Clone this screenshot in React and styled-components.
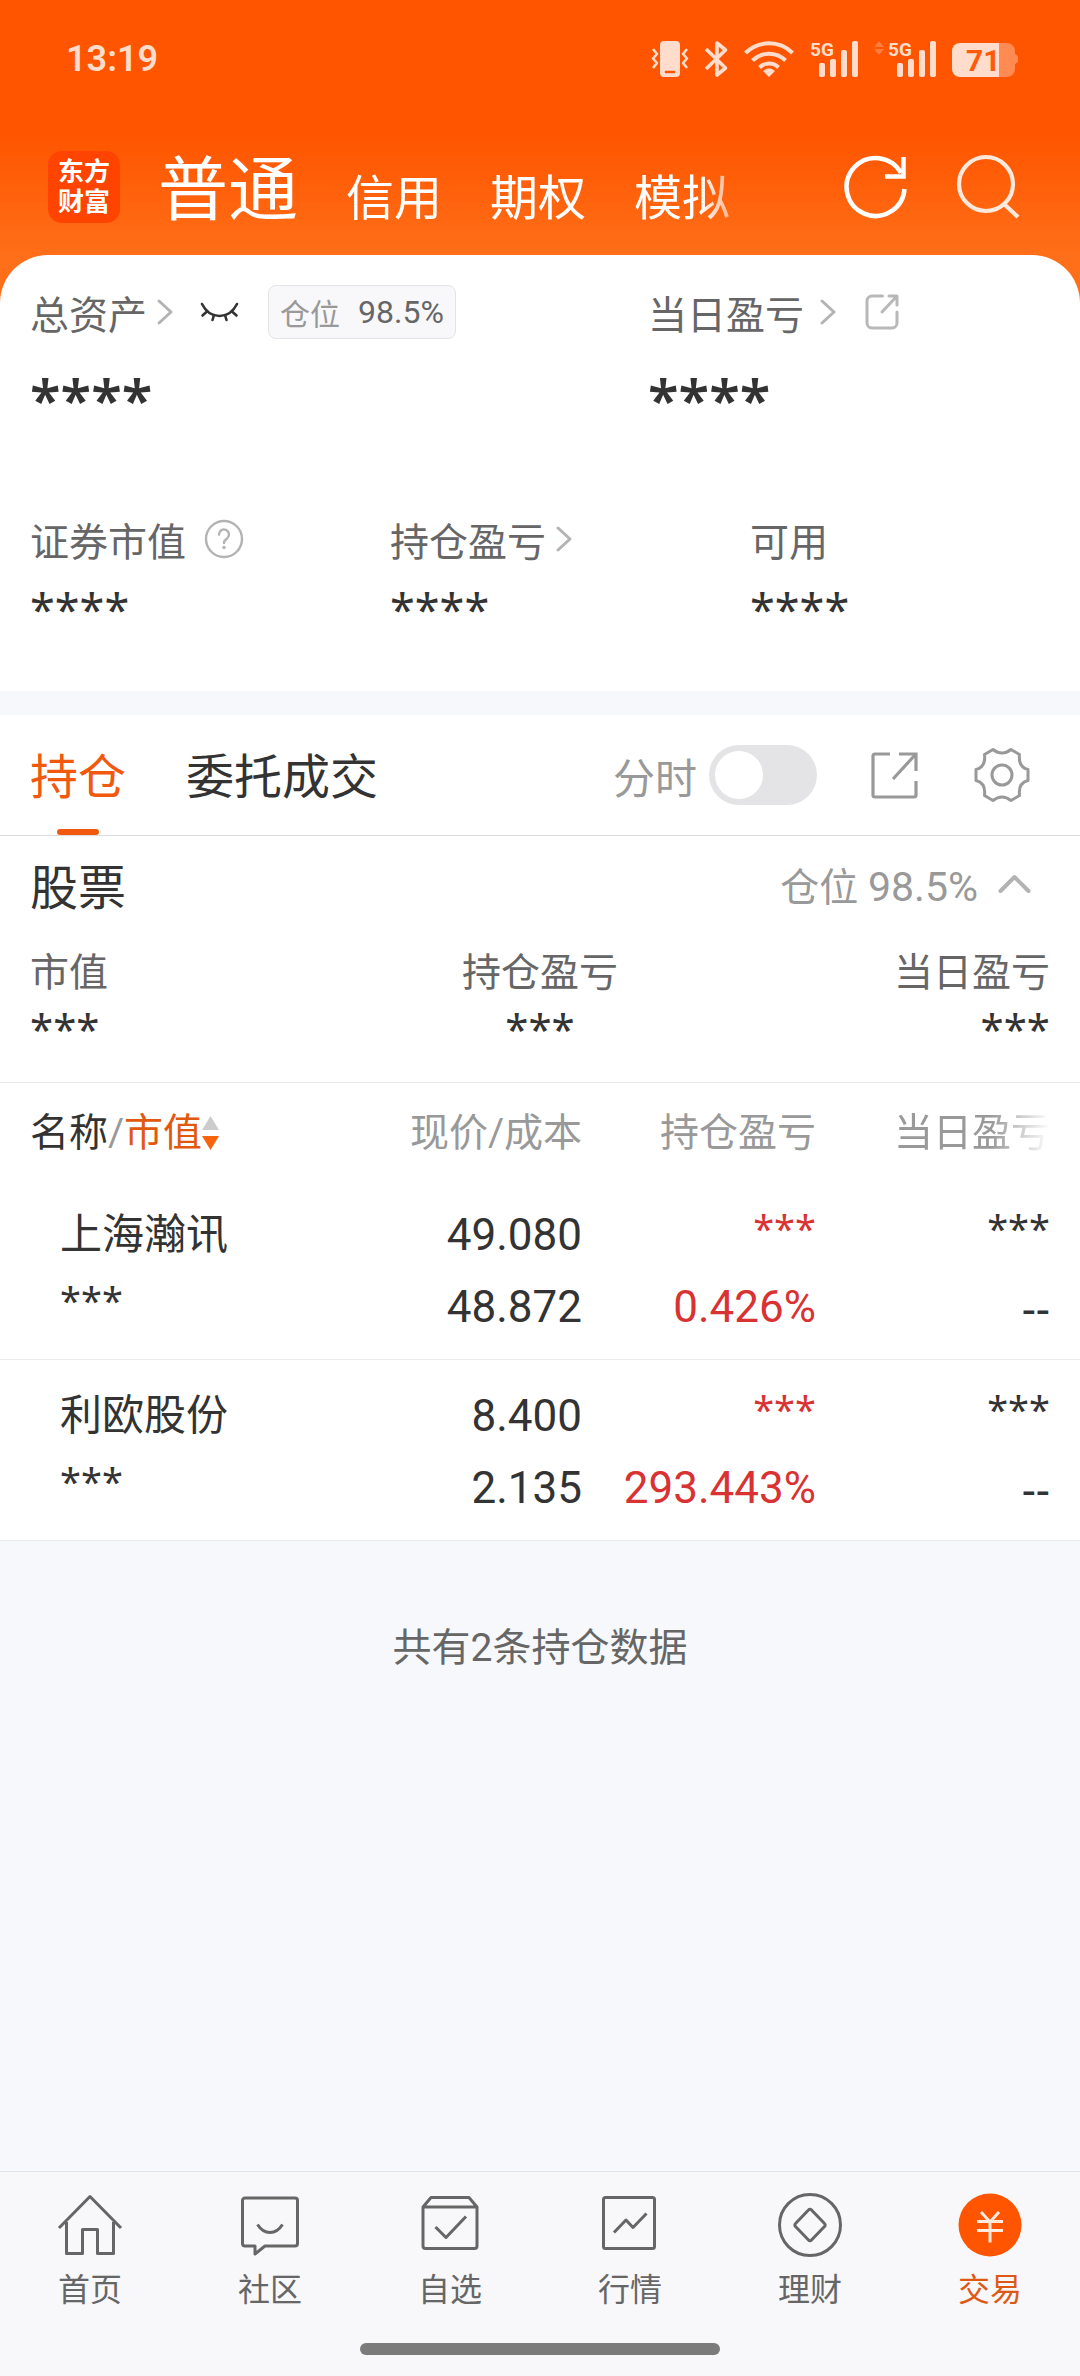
import React, { useState } from "react";
import styled, { createGlobalStyle } from "styled-components";

const GlobalStyle = createGlobalStyle`
  *, *::before, *::after { box-sizing: border-box; }
  body {
    margin: 0;
    background: #f7f8fb;
    color: #333;
    font-family: Roboto, "Noto Sans CJK SC", sans-serif;
    font-size: 39px;
  }
  button {
    border: 0;
    padding: 0;
    background: none;
    color: inherit;
    font: inherit;
    cursor: pointer;
  }
  a { color: inherit; text-decoration: none; }
  svg { display: block; flex: none; overflow: visible; }
  h1, h2, p, dl, dt, dd { margin: 0; font-weight: 400; font-size: inherit; }
`;

const Page = styled.div`
  display: flex;
  flex-direction: column;
  min-height: 100vh;
`;

/* ---------- header ---------- */

const Header = styled.header`
  padding-bottom: 48px;
  background: linear-gradient(#ff5500 0, #ff5500 134px, #ff6e18 254px);
  color: #fff;
`;

const StatusBar = styled.div`
  display: flex;
  align-items: center;
  justify-content: space-between;
  height: 118px;
  padding: 0 62px 0 66px;
  color: #ffdccb;
`;

const Clock = styled.time`
  font-size: 36px;
  font-weight: 600;
`;

const StatusIcons = styled.div`
  display: flex;
  align-items: center;
  gap: 16px;
`;

const TitleBar = styled.div`
  display: flex;
  align-items: center;
  height: 137px;
  padding: 0 60px 0 48px;
`;

const Logo = styled.a`
  display: flex;
  flex-direction: column;
  align-items: center;
  justify-content: center;
  width: 72px;
  height: 72px;
  border-radius: 14px;
  background: #ff4400;
  font-size: 26px;
  font-weight: 700;
  line-height: 30px;
`;

const AccountTabs = styled.nav`
  display: flex;
  flex: 1;
  align-items: baseline;
  gap: 48px;
  margin: 0 27px 0 38px;
  padding-top: 16px;
  overflow: hidden;
  white-space: nowrap;
  mask-image: linear-gradient(to right, #000 calc(100% - 118px), transparent calc(100% - 56px));
`;

const AccountTab = styled.button`
  font-size: ${(p) => (p.$active ? 70 : 48)}px;
  line-height: 88px;
`;

const HeaderActions = styled.div`
  display: flex;
  align-items: center;
  gap: 50px;
`;

/* ---------- asset panel ---------- */

const AssetPanel = styled.section`
  margin-top: -48px;
  padding: 30px 0 54px;
  border-radius: 48px 48px 0 0;
  background: #fff;
`;

const TopAssets = styled.div`
  display: grid;
  grid-template-columns: 3fr 2fr;
  margin-bottom: 82px;
`;

const AssetColumns = styled.div`
  display: grid;
  grid-template-columns: repeat(3, 1fr);
`;

const Asset = styled.div`
  padding-left: ${(p) => (p.$flush ? 0 : 30)}px;
`;

const LabelRow = styled.div`
  display: flex;
  align-items: center;
  height: 54px;
  color: #666;
`;

const LabelButton = styled.button`
  display: flex;
  align-items: center;
  gap: ${(p) => p.$gap}px;
`;

const IconButton = styled.button`
  margin-left: ${(p) => p.$space || 0}px;
`;

const PositionBadge = styled.span`
  display: flex;
  align-items: center;
  gap: 18px;
  height: 54px;
  margin-left: 29px;
  padding: 0 11px;
  border: 1px solid #e4e4e6;
  border-radius: 8px;
  background: #f8f8fa;
  font-size: 32px;
`;

const BadgeLabel = styled.span`
  color: #999;
  font-size: 30px;
`;

const Mask = styled.div`
  margin-top: ${(p) => p.$space || 0}px;
  color: ${(p) => p.$color || "#333"};
  font-family: "Noto Sans", sans-serif;
  font-size: ${(p) => p.$size}px;
  font-weight: ${(p) => (p.$bold ? 600 : 400)};
  line-height: ${(p) => p.$line || 54}px;
`;

/* ---------- holdings ---------- */

const Holdings = styled.main`
  margin-top: 24px;
  background: #fff;
`;

const TabBar = styled.div`
  display: flex;
  align-items: center;
  justify-content: space-between;
  height: 121px;
  padding: 0 50px 0 30px;
  border-bottom: 1px solid #dcdcdc;
`;

const Tabs = styled.div`
  display: flex;
  gap: 60px;
  height: 100%;
`;

const Tab = styled.button`
  position: relative;
  padding-bottom: 4px;
  color: ${(p) => (p.$active ? "#f1590e" : "#333")};
  font-size: 48px;

  &::after {
    content: "";
    display: ${(p) => (p.$active ? "block" : "none")};
    position: absolute;
    bottom: 0;
    left: 50%;
    width: 42px;
    height: 6px;
    margin-left: -21px;
    border-radius: 3px;
    background: #f1590e;
  }
`;

const Tools = styled.div`
  display: flex;
  align-items: center;
`;

const SwitchLabel = styled.label`
  display: flex;
  align-items: center;
  gap: 12px;
  margin-right: 54px;
  color: #999;
  font-size: 42px;
`;

const Switch = styled.input`
  appearance: none;
  display: flex;
  align-items: center;
  width: 108px;
  height: 60px;
  margin: 0;
  padding: 0 6px;
  border-radius: 30px;
  background: ${(p) => (p.checked ? "#ff5500" : "#e4e4e6")};

  &::before {
    content: "";
    width: 48px;
    height: 48px;
    margin-left: ${(p) => (p.checked ? "48px" : "0")};
    border-radius: 50%;
    background: #fff;
  }
`;

const GroupHead = styled.div`
  display: flex;
  align-items: center;
  justify-content: space-between;
  height: 96px;
  padding: 0 49px 0 30px;
`;

const GroupTitle = styled.h2`
  font-size: 48px;
`;

const GroupToggle = styled.button`
  display: flex;
  align-items: center;
  gap: 20px;
  color: #999;
`;

const GroupRate = styled.span`
  font-size: 41px;
`;

const Summary = styled.dl`
  display: grid;
  grid-template-columns: repeat(3, 1fr);
  padding: 14px 30px 26px;
  border-bottom: 1px solid #ebebeb;
`;

const SummaryItem = styled.div`
  text-align: ${(p) => p.$align};
`;

const SummaryLabel = styled.dt`
  color: #666;
  line-height: 54px;
`;

const Table = styled.table`
  width: 100%;
  border-collapse: collapse;
  table-layout: fixed;
`;

const Col = styled.col`
  width: ${(p) => (p.$last ? "264px" : "234px")};
`;

const Th = styled.th`
  height: 96px;
  padding: 4px ${(p) => (p.$last ? 30 : 0)}px 0 ${(p) => (p.$first ? 30 : 0)}px;
  color: #999;
  font-weight: 400;
  line-height: 54px;
  text-align: ${(p) => (p.$first ? "left" : "right")};
`;

const SortButton = styled.button`
  display: flex;
  align-items: center;
`;

const Strong = styled.span`
  color: #333;
`;

const Accent = styled.span`
  color: #e0590f;
`;

const Faded = styled.span`
  mask-image: linear-gradient(to right, #000 62%, transparent);
`;

const Row = styled.tr`
  border-bottom: 1px solid #ebebeb;
`;

const Td = styled.td`
  padding: 20px ${(p) => (p.$last ? 30 : 0)}px 16px ${(p) => (p.$first ? 60 : 0)}px;
  color: ${(p) => (p.$up ? "#d93232" : "#333")};
  font-size: 44px;
  line-height: 72px;
  text-align: ${(p) => (p.$first ? "left" : "right")};
  vertical-align: top;
`;

const StockName = styled.div`
  font-size: 42px;
`;

const CellMask = styled.div`
  padding-bottom: 14px;
  font-family: "Noto Sans", sans-serif;
  font-size: 38px;
  line-height: 58px;
`;

const EmptyValue = styled.div`
  font-family: "Noto Sans", sans-serif;
`;

const Total = styled.p`
  padding-top: 80px;
  color: #666;
  line-height: 54px;
  text-align: center;
`;

/* ---------- bottom navigation ---------- */

const BottomBar = styled.footer`
  margin-top: auto;
  padding-bottom: 21px;
  border-top: 1px solid #e3e3e5;
  background: #f8f8fa;
`;

const BottomNav = styled.nav`
  display: grid;
  grid-template-columns: repeat(6, 1fr);
  height: 171px;
  padding-top: 20px;
`;

const NavItem = styled.a`
  display: flex;
  flex-direction: column;
  align-items: center;
  gap: 10px;
  color: ${(p) => (p.$active ? "#dd5a16" : "#666")};
  font-size: 32px;
  line-height: 44px;
`;

const HomeIndicator = styled.div`
  width: 33.3333%;
  height: 12px;
  margin: 0 auto;
  border-radius: 6px;
  background: #7b7b7b;
`;

/* ---------- icons ---------- */

const VibrateIcon = () => (
  <svg width="38" height="38" viewBox="0 0 38 38" fill="none" stroke="currentColor" strokeWidth="2.6">
    <path d="M2 9l4 5-4 4.500 4 4.500-4 5" strokeLinejoin="round" />
    <path d="M36 9l-4 5 4 4.500-4 4.500 4 5" strokeLinejoin="round" />
    <rect x="9" y="1" width="20" height="36" rx="4" fill="currentColor" stroke="none" />
    <path d="M15 32h8" stroke="#ff5500" strokeLinecap="round" />
  </svg>
);

const BluetoothIcon = () => (
  <svg width="23" height="38" viewBox="0 0 23 38" fill="none" stroke="currentColor" strokeWidth="3.6" strokeLinejoin="round">
    <path d="M1 9l19.500 19L12 35V3l8.500 7L1 29" />
  </svg>
);

const WifiIcon = () => (
  <svg width="50" height="38" viewBox="0 0 50 38" fill="none" stroke="currentColor" strokeWidth="4">
    <path d="M1.500 13a33.500 33.500 0 0 1 47 0" />
    <path d="M8.500 20.500a23.500 23.500 0 0 1 33 0" />
    <path d="M15.500 27.500a13.500 13.500 0 0 1 19 0" />
    <path d="M25 37l-6-6q6-5.500 12 0z" fill="currentColor" stroke="none" />
  </svg>
);

const SignalIcon = ({ traffic }) => (
  <svg width={traffic ? 62 : 48} height="38" viewBox={traffic ? "-14 0 62 38" : "0 0 48 38"} fill="currentColor">
    {traffic && <path d="M-9 1l5 6h-10zM-9 15l5-6h-10z" opacity="0.3" />}
    <text x="0" y="16" fontSize="19" fontWeight="700">5G</text>
    <rect x="9" y="23" width="6" height="14" rx="2" />
    <rect x="20" y="19" width="6" height="18" rx="2" />
    <rect x="31" y="10" width="6" height="27" rx="2" />
    <rect x="42" y="1" width="6" height="36" rx="2" />
  </svg>
);

const BatteryIcon = () => (
  <svg width="66" height="38" viewBox="0 0 66 38">
    <path d="M46 3h9a8 8 0 0 1 8 8v3q3 1 3 3v4q0 2-3 3v5a8 8 0 0 1-8 8h-9z" fill="#ff8b52" />
    <path d="M8 3h39v34H8a8 8 0 0 1-8-8V11a8 8 0 0 1 8-8z" fill="#ffdccb" />
    <text x="14" y="31" fontSize="30" fontWeight="700" fill="#ff5a0a">71</text>
  </svg>
);

const RefreshIcon = () => (
  <svg width="62" height="64" viewBox="0 0 62 64" fill="none" stroke="#fff" strokeWidth="4.500">
    <path d="M59.500 34A29 29 0 1 1 56 18" />
    <path d="M58.500 2v19.500H40" />
  </svg>
);

const SearchIcon = () => (
  <svg width="63" height="64" viewBox="0 0 63 64" fill="none" stroke="#ffe9dd" strokeWidth="4.200">
    <circle cx="29" cy="29" r="27" />
    <path d="M47 49l14 13" />
  </svg>
);

const ChevronRight = () => (
  <svg width="16" height="26" viewBox="0 0 16 26" fill="none" stroke="#b3b3b3" strokeWidth="3" strokeLinecap="round" strokeLinejoin="round">
    <path d="M2 2l12 11L2 24" />
  </svg>
);

const ChevronUp = () => (
  <svg width="33" height="20" viewBox="0 0 33 20" fill="none" stroke="#b3b3b3" strokeWidth="4" strokeLinecap="round" strokeLinejoin="round">
    <path d="M2.500 17l14-14 14 14" />
  </svg>
);

const ClosedEyeIcon = () => (
  <svg width="39" height="20" viewBox="0 0 39 20" fill="none" stroke="#333" strokeWidth="2.600" strokeLinecap="round">
    <path d="M2 2q6 12 17.500 12T37 2" />
    <path d="M7 9.500l-4.500 4M14 13l-1.500 5M25 13l1.500 5M32 9.500l4.500 4" />
  </svg>
);

const HelpIcon = () => (
  <svg width="40" height="40" viewBox="0 0 40 40" fill="none" stroke="#b3b3b3" strokeWidth="2.400" strokeLinecap="round">
    <circle cx="20" cy="20" r="18" />
    <path d="M15 15.500a5 5 0 1 1 8.500 3.500c-2 1.500-3.500 2.500-3.500 5" />
    <circle cx="20" cy="28.500" r="1" fill="#b3b3b3" strokeWidth="1.500" />
  </svg>
);

const ShareSmallIcon = () => (
  <svg width="34" height="36" viewBox="0 0 34 36" fill="none" stroke="#b8b8b8" strokeWidth="3" strokeLinecap="round" strokeLinejoin="round">
    <path d="M17.500 2H7a5 5 0 0 0-5 5v22a5 5 0 0 0 5 5h20a5 5 0 0 0 5-5V18" />
    <path d="M24 2h8v9M32 2L17 18" />
  </svg>
);

const ShareIcon = () => (
  <svg width="47" height="47" viewBox="0 0 47 47" fill="none" stroke="#999" strokeWidth="3.200">
    <path d="M19 2H4a2 2 0 0 0-2 2v39a2 2 0 0 0 2 2h39a2 2 0 0 0 2-2V29" />
    <path d="M28 2h17v17M44 3L22 27" />
  </svg>
);

/* six lobes: flat ends left and right, hollows at top and bottom */
const GearIcon = () => (
  <svg width="56" height="56" viewBox="0 0 56 56" fill="none" stroke="#999" strokeWidth="3" strokeLinejoin="round">
    <path d="M19 2.500q9 7 18 0l8.500 5q-1.500 12.500 8.500 15v11q-10 2.500-8.500 15l-8.500 5q-9-7-18 0l-8.500-5Q12 36 2 33.500v-11q10-2.500 8.500-15z" />
    <circle cx="28" cy="28" r="10" />
  </svg>
);

const SortIcon = () => (
  <svg width="17" height="36" viewBox="0 0 17 36">
    <path d="M8.500 1L17 15H0z" fill="#ccc" />
    <path d="M8.500 35L0 21h17z" fill="#f7630f" />
  </svg>
);

const NavSvg = ({ children }) => (
  <svg width="66" height="66" viewBox="0 0 66 66" fill="none" stroke="currentColor" strokeWidth="3" strokeLinejoin="round">
    {children}
  </svg>
);

const HomeIcon = () => (
  <NavSvg>
    <path d="M2 36L33 4.500 64 36" />
    <path d="M9.500 30v31.500h16v-24h15v24h16V30" />
  </NavSvg>
);

const CommunityIcon = () => (
  <NavSvg>
    <path d="M8 6h50a2.500 2.500 0 0 1 2.500 2.500v43A2.500 2.500 0 0 1 58 54H28l-10 8v-8H8a2.500 2.500 0 0 1-2.500-2.500v-43A2.500 2.500 0 0 1 8 6z" />
    <path d="M20.500 32.500q5 8 12.500 8t12.500-8" />
  </NavSvg>
);

const WatchlistIcon = () => (
  <NavSvg>
    <path d="M6 15l8-9.500h38l8 9.500v39a2.500 2.500 0 0 1-2.500 2.500h-49A2.500 2.500 0 0 1 6 54zM6 15h54" />
    <path d="M18.500 35L29 45.500l20-21" />
  </NavSvg>
);

const MarketIcon = () => (
  <NavSvg>
    <rect x="6.500" y="5.500" width="51" height="51" rx="2" />
    <path d="M17 40.500l12-12.500 7 7.500L49.500 21.500" />
  </NavSvg>
);

const WealthIcon = () => (
  <NavSvg>
    <circle cx="33" cy="33" r="30.500" />
    <path d="M31.500 18L18.500 31.500a2 2 0 0 0 0 3L31.500 48a2 2 0 0 0 3 0L47.500 34.500a2 2 0 0 0 0-3L34.500 18a2 2 0 0 0-3 0z" />
  </NavSvg>
);

const TradeIcon = () => (
  <NavSvg>
    <circle cx="33" cy="33" r="31.500" fill="#ff5500" stroke="none" />
    <g stroke="#ffeadd">
      <path d="M24 20l9 10 9-10M33 29v21.500M20 29.500h26M20 38.500h26" />
    </g>
  </NavSvg>
);

/* ---------- data ---------- */

const accounts = ["普通", "信用", "期权", "模拟"];

const holdings = [
  { name: "上海瀚讯", price: "49.080", cost: "48.872", rate: "0.426%" },
  { name: "利欧股份", price: "8.400", cost: "2.135", rate: "293.443%" },
];

const summary = [
  { label: "市值", align: "left" },
  { label: "持仓盈亏", align: "center" },
  { label: "当日盈亏", align: "right" },
];

const navItems = [
  { label: "首页", Icon: HomeIcon },
  { label: "社区", Icon: CommunityIcon },
  { label: "自选", Icon: WatchlistIcon },
  { label: "行情", Icon: MarketIcon },
  { label: "理财", Icon: WealthIcon },
  { label: "交易", Icon: TradeIcon, active: true },
];

export default function App() {
  const [intraday, setIntraday] = useState(false);

  return (
    <Page>
      <GlobalStyle />
      <Header>
        <StatusBar>
          <Clock>13:19</Clock>
          <StatusIcons>
            <VibrateIcon />
            <BluetoothIcon />
            <WifiIcon />
            <SignalIcon />
            <SignalIcon traffic />
            <BatteryIcon />
          </StatusIcons>
        </StatusBar>
        <TitleBar>
          <Logo href="#">
            <span>东方</span>
            <span>财富</span>
          </Logo>
          <AccountTabs>
            {accounts.map((name, i) => (
              <AccountTab key={name} type="button" $active={i === 0}>{name}</AccountTab>
            ))}
          </AccountTabs>
          <HeaderActions>
            <button type="button" aria-label="刷新"><RefreshIcon /></button>
            <button type="button" aria-label="搜索"><SearchIcon /></button>
          </HeaderActions>
        </TitleBar>
      </Header>

      <AssetPanel>
        <TopAssets>
          <Asset>
            <LabelRow>
              <LabelButton type="button" $gap={10}>总资产<ChevronRight /></LabelButton>
              <IconButton type="button" aria-label="显示金额" $space={27}><ClosedEyeIcon /></IconButton>
              <PositionBadge><BadgeLabel>仓位</BadgeLabel>98.5%</PositionBadge>
            </LabelRow>
            <Mask $size={56} $bold $space={27} $line={64}>****</Mask>
          </Asset>
          <Asset $flush>
            <LabelRow>
              <LabelButton type="button" $gap={16}>当日盈亏<ChevronRight /></LabelButton>
              <IconButton type="button" aria-label="分享当日盈亏" $space={29}><ShareSmallIcon /></IconButton>
            </LabelRow>
            <Mask $size={56} $bold $space={27} $line={64}>****</Mask>
          </Asset>
        </TopAssets>
        <AssetColumns>
          <Asset>
            <LabelRow>
              证券市值
              <IconButton type="button" aria-label="说明" $space={18}><HelpIcon /></IconButton>
            </LabelRow>
            <Mask $size={45} $space={17}>****</Mask>
          </Asset>
          <Asset>
            <LabelRow>
              <LabelButton type="button" $gap={10}>持仓盈亏<ChevronRight /></LabelButton>
            </LabelRow>
            <Mask $size={45} $space={17}>****</Mask>
          </Asset>
          <Asset>
            <LabelRow>可用</LabelRow>
            <Mask $size={45} $space={17}>****</Mask>
          </Asset>
        </AssetColumns>
      </AssetPanel>

      <Holdings>
        <TabBar>
          <Tabs>
            <Tab type="button" $active>持仓</Tab>
            <Tab type="button">委托成交</Tab>
          </Tabs>
          <Tools>
            <SwitchLabel>
              分时
              <Switch
                type="checkbox"
                role="switch"
                checked={intraday}
                onChange={(e) => setIntraday(e.target.checked)}
              />
            </SwitchLabel>
            <IconButton type="button" aria-label="分享持仓"><ShareIcon /></IconButton>
            <IconButton type="button" aria-label="设置" $space={56}><GearIcon /></IconButton>
          </Tools>
        </TabBar>

        <GroupHead>
          <GroupTitle>股票</GroupTitle>
          <GroupToggle type="button">
            <span>仓位 <GroupRate>98.5%</GroupRate></span>
            <ChevronUp />
          </GroupToggle>
        </GroupHead>

        <Summary>
          {summary.map(({ label, align }) => (
            <SummaryItem key={label} $align={align}>
              <SummaryLabel>{label}</SummaryLabel>
              <Mask as="dd" $size={42} $space={2}>***</Mask>
            </SummaryItem>
          ))}
        </Summary>

        <Table>
          <colgroup>
            <col />
            <Col />
            <Col />
            <Col $last />
          </colgroup>
          <thead>
            <tr>
              <Th $first scope="col">
                <SortButton type="button">
                  <span><Strong>名称</Strong>/<Accent>市值</Accent></span>
                  <SortIcon />
                </SortButton>
              </Th>
              <Th scope="col">现价/成本</Th>
              <Th scope="col">持仓盈亏</Th>
              <Th $last scope="col"><Faded>当日盈亏</Faded></Th>
            </tr>
          </thead>
          <tbody>
            {holdings.map((h) => (
              <Row key={h.name}>
                <Td $first>
                  <StockName>{h.name}</StockName>
                  <CellMask>***</CellMask>
                </Td>
                <Td>
                  <div>{h.price}</div>
                  <div>{h.cost}</div>
                </Td>
                <Td $up>
                  <CellMask>***</CellMask>
                  <div>{h.rate}</div>
                </Td>
                <Td $last>
                  <CellMask>***</CellMask>
                  <EmptyValue>--</EmptyValue>
                </Td>
              </Row>
            ))}
          </tbody>
        </Table>
      </Holdings>

      <Total>共有2条持仓数据</Total>

      <BottomBar>
        <BottomNav>
          {navItems.map(({ label, Icon, active }) => (
            <NavItem key={label} href="#" $active={active}>
              <Icon />
              {label}
            </NavItem>
          ))}
        </BottomNav>
        <HomeIndicator />
      </BottomBar>
    </Page>
  );
}
